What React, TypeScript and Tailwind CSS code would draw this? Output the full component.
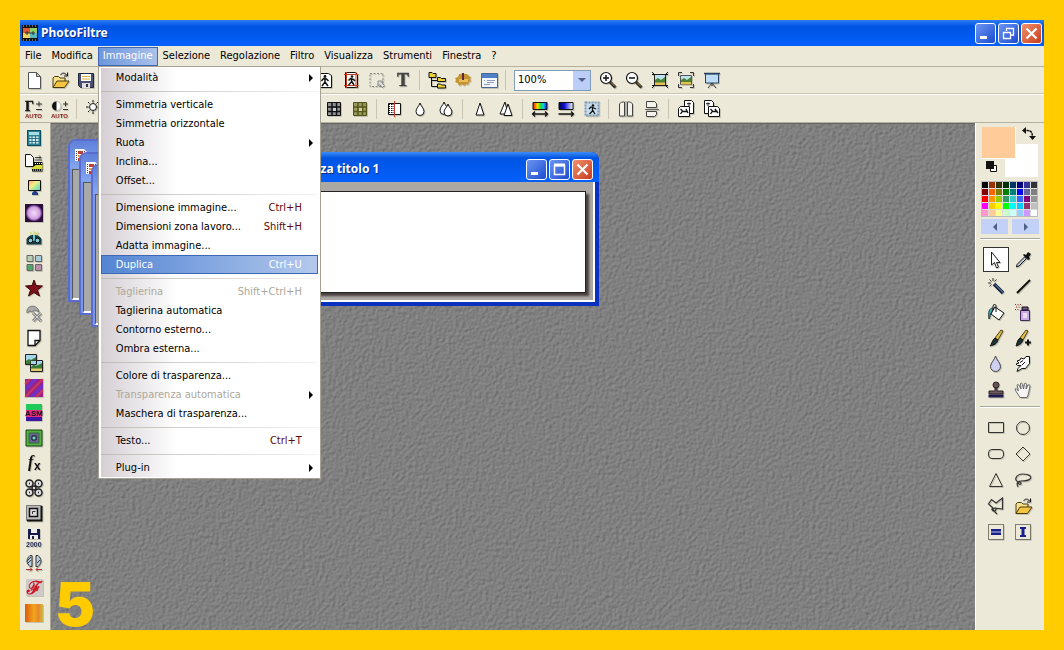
import type { ReactNode } from "react";

const K = "#111";

const icons: Record<string, ReactNode> = {
  newFile: <path d="M3.5 1.5h8l4 4v12h-12z M11.5 1.5v4h4" fill="#fff" stroke="#555" />,
  open: (
    <>
      <path d="M2 16.500V7l1.500-1.500h4L9 7h5v3" fill="#f8e08a" stroke="#4a3a10" />
      <path d="M2 16.500l4-6.500h12l-4.500 6.500z" fill="#f5c542" stroke="#4a3a10" />
      <path d="M9.500 4C11 1.500 14 1.500 15.500 4M16.500 1.500v3.500h-3.500" fill="none" stroke={K} />
    </>
  ),
  save: (
    <>
      <path d="M1.500 2.500h15v14h-13l-2-2z" fill="#4a4f70" stroke="#23263c" />
      <path d="M4 3h10v7H4z" fill="#fff" />
      <path d="M5 5h8v1H5zM5 7.500h8v1H5z" fill="#d9b23c" />
      <path d="M5 12h8v5H5z" fill="#ddd" />
      <path d="M9 13h2v3H9z" fill="#334" />
    </>
  ),
  walker: (
    <>
      <path d="M1.500 2.500h11l3 2v12h-14z" fill="#fff" stroke={K} />
      <circle cx="9" cy="5.500" r="1.400" fill={K} />
      <path d="M9 7v4l-3 4M9 11l3 4M5.500 10l2-2.500 3 .5 2 2" fill="none" stroke={K} strokeWidth="1.500" />
    </>
  ),
  walkerRed: (
    <>
      <path d="M3.500 1.500h10l2 2v13h-12z" fill="#fff" stroke={K} />
      <path d="M2 3.500h14.500M2 14.500h14.500M4.500 1v16M14 1v16" stroke="#c33a1c" />
      <circle cx="10" cy="5.500" r="1.300" fill={K} />
      <path d="M9.500 7v4l-3 3M9.500 10l2.500 4M6.500 9.500l2-2 3 1 1.500 1.500" fill="none" stroke={K} strokeWidth="1.500" />
    </>
  ),
  marquee: (
    <>
      <path d="M2 2.500h13v13H2z" fill="none" stroke="#888" strokeDasharray="2 1.500" />
      <path d="M10 10h5l-1.500 1.500 3 3-2 2-3-3L10 15z" fill="#ddd" stroke="#888" />
    </>
  ),
  text: (
    <text x="9" y="15" textAnchor="middle" fontSize="18" fontWeight="700" fill="#444" stroke="#444" strokeWidth="0.5" fontFamily="Liberation Serif">T</text>
  ),
  tree: (
    <>
      <path d="M3.500 6v9.500H9M3.500 9.500H9" fill="none" stroke={K} />
      <path d="M1 1.500h3l1 1h3v4H1zM9.500 6.500h3l1 1h4v3h-8zM9.500 13h3l1 1h4v3h-8z" fill="#e8cf3a" stroke={K} />
    </>
  ),
  gear: (
    <>
      <path d="M7 3l2-1 2 1 2 0 2 2 2 1-1 2 1 2-2 1-1 3-2-1-2 2-2-2-3 2-1-3-3-1 1-2-1-2 3-1 1-3z" fill="#c69430" />
      <path d="M5 8h9v3H5z" fill="#e7be5b" />
      <path d="M9 2v7" stroke="#5d2a3a" strokeWidth="2" />
    </>
  ),
  windowList: (
    <>
      <path d="M1.500 2.500h16v14h-16z" fill="#f1f6ff" stroke="#49688f" />
      <path d="M2 3h15v4H2z" fill="#4f7fc4" />
      <path d="M7 9.500h8M7 11.500h7M4 13.500h6M4 9.500h1" stroke="#8d9db8" />
    </>
  ),
  zoomIn: (
    <>
      <circle cx="7" cy="7" r="5.500" fill="#fff" stroke={K} strokeWidth="1.200" />
      <path d="M4 7h6M7 4v6" stroke={K} strokeWidth="1.500" />
      <path d="M11 11l5.500 5.500" stroke="#222" strokeWidth="3" />
      <path d="M12 11.500l4 4" stroke="#c9a24c" />
    </>
  ),
  zoomOut: (
    <>
      <circle cx="7" cy="7" r="5.500" fill="#fff" stroke={K} strokeWidth="1.200" />
      <path d="M4 7h6" stroke={K} strokeWidth="1.500" />
      <path d="M11 11l5.500 5.500" stroke="#222" strokeWidth="3" />
      <path d="M12 11.500l4 4" stroke="#c9a24c" />
    </>
  ),
  picture: (
    <>
      <path d="M3.500 3.500h11v11h-11z" fill="#bde2f2" stroke="#222" />
      <path d="M4 9l3-2 3 2 4-3v8H4z" fill="#4b8234" />
      <path d="M4 11.500h10V14H4z" fill="#e3c04f" />
      <path d="M1 1l3 3M17 1l-3 3M1 17l3-3M17 17l-3-3M1 3.500h3M14 3.500h3M1 14.500h3M14 14.500h3" stroke={K} />
    </>
  ),
  pictureOut: (
    <>
      <path d="M3.500 4.500h11v9h-11z" fill="#bde2f2" stroke="#555" />
      <path d="M4 9l3-2 3 2 4-3v7H4z" fill="#4b8234" />
      <path d="M4 11h10v2.500H4z" fill="#e3c04f" />
      <path d="M1.500 5V1.500H5M13 1.500h3.500V5M1.500 13v3.500H5M13 16.500h3.500V13" fill="none" stroke="#333" />
    </>
  ),
  screen: (
    <>
      <path d="M2.500 3h13v9h-13z" fill="#bcdcf7" stroke="#2a4260" />
      <path d="M1 2.500h16" stroke="#2a4260" strokeWidth="1.500" />
      <path d="M9 12l-4 5M9 12l4 5M9 12v3" stroke="#333" />
    </>
  ),
  gamma: (
    <>
      <text x="0" y="11" fontSize="14" fontWeight="700" fill={K} stroke={K} strokeWidth="0.4" fontFamily="Liberation Serif">Γ</text>
      <path d="M11 4h6M14 1.500v5M11 9.500h6" stroke="#333" />
      <text x="0" y="18" fontSize="6" fontWeight="700" fill="#8b1a1a" fontFamily="Liberation Sans">AUTO</text>
    </>
  ),
  contrast: (
    <>
      <circle cx="5.500" cy="6" r="4.500" fill="#fff" stroke="#bbb" />
      <path d="M5.500 1.500a4.500 4.500 0 0 0 0 9z" fill={K} />
      <path d="M12 4h5M14.500 1.500v5M12 9.500h5" stroke="#333" />
      <text x="0" y="18" fontSize="6" fontWeight="700" fill="#8b1a1a" fontFamily="Liberation Sans">AUTO</text>
    </>
  ),
  sun: (
    <>
      <circle cx="8" cy="7" r="3.500" fill="#fff" stroke={K} />
      <path d="M8 0v2.500M8 11.500V14M1 7h2.500M12.500 7H15M3 2l1.500 1.500M13 2l-1.500 1.500M3 12l1.500-1.500" stroke={K} />
      <path d="M14 13.500h4" stroke={K} strokeWidth="2" />
    </>
  ),
  grid: (
    <>
      <path d="M2.500 2.500h13v13h-13z" fill="#8f8f96" stroke={K} />
      <path d="M7 2v14M11.500 2v14M2 7h14M2 11.500h14" stroke={K} strokeWidth="1.500" />
      <path d="M8 8h3v3H8z" fill="#ccc" />
    </>
  ),
  gridOlive: (
    <>
      <path d="M2.500 2.500h13v13h-13z" fill="#9a9a5c" stroke="#4f5218" />
      <path d="M7 2v14M11.500 2v14M2 7h14M2 11.500h14" stroke="#565a1e" strokeWidth="1.500" />
      <path d="M8 8h3v3H8z" fill="#d2d29a" />
    </>
  ),
  halfMask: (
    <>
      <path d="M3.500 3.500h12v11h-12z" fill="#fff" stroke={K} />
      <path d="M4.500 4v10M6.500 4v10M8 4v10" stroke={K} strokeDasharray="1 1" />
      <path d="M9.500 1v16" stroke="#c23a2a" />
    </>
  ),
  drop: <path d="M9 3c1 3.500 4 5 4 8.500a4 4 0 0 1-8 0C5 8 8 6.500 9 3z" fill="#fff" stroke={K} />,
  drops: (
    <>
      <path d="M7 2c1 3.500 4 5 4 8.500a4 4 0 0 1-8 0C3 7 6 5.500 7 2z" fill="#fff" stroke={K} />
      <path d="M11 4c1 3.500 4 5 4 8a4 4 0 0 1-8 0c0-3 3-4.500 4-8z" fill="#fff" stroke={K} />
    </>
  ),
  cone: <path d="M9 3l4 12H5z" fill="#fff" stroke={K} />,
  cones: (
    <>
      <path d="M8 2L3 14h8z" fill="#fff" stroke={K} />
      <path d="M11 4L7 15.500h8z" fill="#fff" stroke={K} />
    </>
  ),
  spectrum: (
    <>
      <defs>
        <linearGradient id="rainbow">
          <stop offset="0" stopColor="#f00" />
          <stop offset=".3" stopColor="#fd0" />
          <stop offset=".55" stopColor="#2d3" />
          <stop offset=".75" stopColor="#0cf" />
          <stop offset="1" stopColor="#20d" />
        </linearGradient>
      </defs>
      <path d="M2 2.500h14v7H2z" fill="url(#rainbow)" stroke={K} />
      <path d="M1.500 14h15M4 11.500L1.500 14 4 16.500M14 11.500l2.500 2.500-2.500 2.500" fill="none" stroke={K} strokeWidth="1.300" />
    </>
  ),
  blues: (
    <>
      <defs>
        <linearGradient id="bluefade">
          <stop offset="0" stopColor="#004" />
          <stop offset=".4" stopColor="#11d" />
          <stop offset="1" stopColor="#fff" />
        </linearGradient>
      </defs>
      <path d="M2 2.500h14v7H2z" fill="url(#bluefade)" stroke={K} />
      <path d="M1.500 14h15M14 11.500l2.500 2.500-2.500 2.500" fill="none" stroke={K} strokeWidth="1.300" />
    </>
  ),
  stamp: (
    <>
      <path d="M2.500 2.500h13v13h-13z" fill="#c8dcee" stroke="#7f9ab4" strokeWidth="2" strokeDasharray="2 1" />
      <circle cx="10" cy="5.500" r="1.300" fill={K} />
      <path d="M9.500 7v4l-3 3M9.500 10l2.500 4M6 9l2-2 3 1 2 1" fill="none" stroke={K} strokeWidth="1.300" />
    </>
  ),
  mirror: (
    <>
      <path d="M2.500 4l2-2h3v14h-5zM10.500 2h3l2 2v12h-5z" fill="#f4f2ea" stroke="#444" />
      <path d="M9 1v16" stroke="#999" />
    </>
  ),
  flip: (
    <>
      <path d="M3.500 1.500h8l2 2v4h-10zM3.500 11.500h10v3l-2 2h-8z" fill="#f4f2ea" stroke="#444" />
      <path d="M2 9.500h14" stroke="#666" />
    </>
  ),
  rotateL: (
    <>
      <path d="M7.500 .5h7l2 2v11h-9z" fill="#fff" stroke={K} />
      <path d="M10 4l2-1 2 1M12 3v3" stroke={K} fill="none" />
      <path d="M1.500 8.500l2-2h9v10h-11z" fill="#fff" stroke={K} />
      <path d="M3.500 9l2 2-2 3M5.500 11.500h5M9 9l2 4" stroke={K} fill="none" strokeWidth="1.300" />
    </>
  ),
  rotateR: (
    <>
      <path d="M1.500 .5h7l2 2v11h-9z" fill="#fff" stroke={K} />
      <path d="M3 4l2-1 2 1M5 3v3" stroke={K} fill="none" />
      <path d="M5.500 6.500h9l2 2v8h-11z" fill="#fff" stroke={K} />
      <path d="M7.500 9l2 2-2 3M9.500 11.500h5M12 9l3 4" stroke={K} fill="none" strokeWidth="1.300" />
    </>
  ),
  calculator: (
    <>
      <path d="M2 1h14v16H2z" fill="#2b8296" />
      <path d="M4 3h10v3H4z" fill="#a9dbe2" />
      <path d="M4.500 7.500h9v7h-9z" fill="#d6f2f4" />
      <path d="M4 9.500h10M4 12.500h10M7 7v8M10.500 7v8" stroke="#2b6f82" />
      <path d="M2.500 1.500h13v15h-13z" fill="none" stroke="#0c4c60" />
    </>
  ),
  filmDoc: (
    <>
      <path d="M7 8h10.500v9.500H7z" fill={K} />
      <path d="M8 9.500h9M8 16h9" stroke="#fff" strokeDasharray="1 1" />
      <path d="M6 14l5-3h6.500v4H6z" fill="#d8dc38" />
      <path d="M.5 .5h5l3 3v9h-8z" fill="#fff" stroke={K} />
      <path d="M10 3.500h6M14 1.500l2 2-2 2M10 6h7" stroke="#444" fill="none" />
    </>
  ),
  monitor: (
    <>
      <defs>
        <linearGradient id="rainbowSoft" x2="1" y2="1">
          <stop offset="0" stopColor="#ff8f7a" />
          <stop offset=".4" stopColor="#f9ef87" />
          <stop offset=".7" stopColor="#8fe7a4" />
          <stop offset="1" stopColor="#7eb8f5" />
        </linearGradient>
      </defs>
      <path d="M3.500 1.500h12v10h-12z" fill="url(#rainbowSoft)" stroke={K} />
      <path d="M9 12h2l2 2v2H7v-2z" fill="#23408a" />
    </>
  ),
  glow: (
    <>
      <defs>
        <radialGradient id="glowball">
          <stop offset="0" stopColor="#f4dcfa" />
          <stop offset=".7" stopColor="#cfa0dd" />
          <stop offset=".85" stopColor="#8a55a8" />
          <stop offset="1" stopColor="#2c0f38" />
        </radialGradient>
      </defs>
      <path d="M0 0h18v18H0z" fill="#2c0f38" />
      <circle cx="9" cy="9" r="8.500" fill="url(#glowball)" />
    </>
  ),
  camera: (
    <>
      <path d="M3 8l3-2h6l3 2 1.500 2v5.500h-15V10z" fill="#123c46" />
      <path d="M9 2v5M5 3l2 3M13 3l-2 3" stroke="#e0e080" strokeWidth="1.500" />
      <path d="M8 6h2v6H8z" fill="#6fc6d0" />
      <circle cx="5.500" cy="11.500" r="2.300" fill="#7fccd4" stroke={K} />
      <circle cx="12.500" cy="11.500" r="2.300" fill="#7fccd4" stroke={K} />
    </>
  ),
  tiles: (
    <g stroke="#666">
      <path d="M2 1.500h6v6H2z" fill="#b9cdb2" />
      <path d="M10.500 1.500h6v6h-6z" fill="#a9cdd8" />
      <path d="M2 10.500h6v6H2z" fill="#53a56a" />
      <path d="M10.500 10.500h6v6h-6z" fill="#b990ab" />
    </g>
  ),
  star: <path d="M9 1l2 5.500 6.500.5-5 4 2 6L9 13.500 3.500 17l2-6-5-4L7 6.500z" fill="#7d1019" stroke="#3a0508" />,
  pickaxe: (
    <>
      <path d="M2 6c2-5 8-5 11-1l1 3-4-2-3 2-2-1-3 2z" fill="#aaa" stroke="#777" />
      <path d="M8 9l8 8M16 9l-8 8" stroke="#888" strokeWidth="3" />
      <path d="M8 9l8 8M16 9l-8 8" stroke="#ccc" />
    </>
  ),
  page: <path d="M3 1.500h12v10l-5 5H3zM10 16.500v-5h5" fill="#fff" stroke={K} strokeWidth="1.300" />,
  photos: (
    <>
      <path d="M.5 .5h11v10H.5zM5.500 6.500h12v11h-12z" fill="#a5d6ee" stroke="#222" />
      <path d="M1 7l3-2 2 1 5-3v3.500H5.500V10H1zM6 13l3-3 2 2 6-3v6H6z" fill="#3d7a35" />
      <path d="M6 14.500h11V17H6z" fill="#e3d06a" />
    </>
  ),
  plasma: (
    <>
      <path d="M0 0h18v18H0z" fill="#a01f85" />
      <path d="M0 8L8 0h5L0 13zM4 18L18 4v5l-9 9z" fill="#7030c4" />
      <path d="M0 18L18 0M0 5l5-5M11 18l7-7" stroke="#d24848" strokeWidth="2" opacity=".7" />
    </>
  ),
  asm: (
    <>
      <path d="M1 0h16v6H1z" fill="#1ecb58" />
      <path d="M1 6h16v7H1z" fill="#ee2c86" />
      <path d="M1 13h16v4H1z" fill="#3d16a8" />
      <text x="9" y="11.500" textAnchor="middle" fontSize="8" fontWeight="700" fill={K} fontFamily="Liberation Sans">ASM</text>
    </>
  ),
  squares: (
    <>
      <path d="M1 1h16v16H1z" fill="#55b03e" stroke="#174316" />
      <path d="M4 4h10v10H4z" fill="#6c6498" stroke="#2d6b3a" />
      <path d="M7 7h4v4H7z" fill="#76d5cc" stroke={K} />
    </>
  ),
  fx: (
    <>
      <text x="3" y="13" fontSize="16" fontStyle="italic" fontWeight="700" fill={K} fontFamily="Liberation Serif">f</text>
      <text x="9" y="16" fontSize="12" fontWeight="700" fill={K} fontFamily="Liberation Sans">x</text>
    </>
  ),
  rings: (
    <g fill="#ddd" stroke="#222" strokeWidth="1.500">
      <circle cx="4.500" cy="4.500" r="3.500" />
      <circle cx="13.500" cy="4.500" r="3.500" />
      <circle cx="4.500" cy="13.500" r="3.500" />
      <circle cx="13.500" cy="13.500" r="3.500" />
      <circle cx="9" cy="9" r="2" />
      <path d="M4 4.500h1M13 4.500h1M4 13.500h1M13 13.500h1" />
    </g>
  ),
  frame: (
    <>
      <path d="M1.500 1.500h15v15h-15z" fill="#bbb" stroke="#777" />
      <path d="M16.500 2v14.500H2" fill="none" stroke={K} strokeWidth="2" />
      <path d="M4.500 4.500h8v8h-8z" fill="#ddd" stroke={K} strokeWidth="1.500" />
      <path d="M7.500 10V7.500h3" stroke="#333" fill="none" />
    </>
  ),
  save2000: (
    <>
      <path d="M3 0h12v10H3z" fill="#151a4a" />
      <path d="M6 0h6v4H6zM5 6h8v4H5z" fill="#eee" />
      <path d="M7 7h2v3H7z" fill="#223" />
      <text x="1" y="18" fontSize="7" fontWeight="700" fill="#1c2550" fontFamily="Liberation Sans">2000</text>
    </>
  ),
  lenses: (
    <>
      <path d="M5 1.500h2v11H5C1 9 1 5 5 1.500zM11 1.500h2c4 3.500 4 7.500 0 11h-2z" fill="#b7cde0" stroke="#333" />
      <path d="M2 7l4-4M2 10l4-4M12 9l3-3" stroke="#333" />
      <path d="M1 15.500h6M5 13.500l2 2-2 2M17 15.500h-6M13 13.500l-2 2 2 2" stroke="#a33" fill="none" />
    </>
  ),
  scriptF: (
    <>
      <path d="M1 0h17v17H1z" fill="#cfcac8" />
      <text x="9" y="15" textAnchor="middle" fontSize="18" fontWeight="700" fill="#cb1723" fontFamily="Liberation Serif, DejaVu Serif, serif">ℱ</text>
    </>
  ),
  orangeFade: (
    <>
      <defs>
        <linearGradient id="orangefade">
          <stop offset="0" stopColor="#dc5a10" />
          <stop offset=".5" stopColor="#f2a51c" />
          <stop offset=".75" stopColor="#e8862a" />
          <stop offset="1" stopColor="#c7c24c" />
        </linearGradient>
      </defs>
      <path d="M0 0h18v18H0z" fill="url(#orangefade)" />
    </>
  ),
  pointer: <path d="M4.500 1v13l3-2.500 2 5.500 2-1-2-4.500H13z" fill="#fff" stroke="#222" />,
  dropper: (
    <>
      <path d="M10 3l2 1 2-3 3 2-2 3 1 2-2 1-5-5z" fill={K} />
      <path d="M10.500 6L3 13.500 2.500 16 5 15l7.500-7.500z" fill="#bcd" stroke={K} />
    </>
  ),
  wand: (
    <>
      <path d="M7 7l9 9" stroke="#14213f" strokeWidth="3.500" />
      <path d="M8 7.500l8 8" stroke="#7fa4d0" />
      <path d="M6 1v3M1 6h3M2.500 2.500l2 2M9.500 2.500l-2 2M2.500 9.500l2-2" stroke="#333" />
    </>
  ),
  line: <path d="M3 16L16 3" stroke={K} strokeWidth="2" />,
  bucket: (
    <>
      <path d="M8 4l9 6-5 7-8-6z" fill="#fff" stroke={K} />
      <path d="M9 9V2.500L7.500 1 6 3v4" fill="none" stroke={K} />
      <path d="M6 5c-4 0-5 4-4 11 1.500-1 .5-6 3-7z" fill="#40b3a6" stroke="#234" />
    </>
  ),
  spray: (
    <>
      <path d="M6.500 7.500h9v10h-9z" fill="#c9a9e3" stroke="#432a5c" />
      <path d="M8 4h6v3H8z" fill="#7a5a9a" stroke={K} />
      <path d="M9 10h4v5H9z" fill="#eedcf5" />
      <path d="M1 1.500h6M2 4h5M1 6.500h4" stroke="#8d2430" strokeDasharray="1 1.500" />
    </>
  ),
  brush: (
    <>
      <path d="M14 1l2 1-5 9-3-2z" fill="#e0c04c" stroke="#4d3a12" />
      <path d="M8 9l3 2c-1 4-4 5-8 6 2-2 2-6 5-8z" fill="#1d3433" stroke={K} />
    </>
  ),
  brushPlus: (
    <>
      <path d="M12 1l2 1-5 9-3-2z" fill="#e0c04c" stroke="#4d3a12" />
      <path d="M6 9l3 2c-1 4-4 5-7 6 1-2 1-6 4-8z" fill="#1d3433" stroke={K} />
      <path d="M11 13.500h6M14 10.500v6" stroke={K} strokeWidth="2" />
    </>
  ),
  blur: <path d="M8.500 1c1 4 5 7 5 10.500a5 5 0 0 1-10 0C3.500 8 7.500 5 8.500 1z" fill="#cfcff2" stroke="#444" />,
  smudge: (
    <>
      <path d="M15.500 1.500v7l-4 5H8l-5 3 1-3 3-3H3.500L2 9l3-1-2-2 3-1 1-2 3 1 2-2.500z" fill="#fafafa" stroke={K} />
      <path d="M6 7.500l3-2M8 10l3-3" stroke={K} />
    </>
  ),
  rubber: (
    <>
      <circle cx="9" cy="4" r="3" fill="#675358" stroke="#2c2226" />
      <path d="M8 7h2v3h6v3H2v-3h6z" fill="#6d5960" stroke="#2c2226" />
      <path d="M1.500 13.500h15v3h-15z" fill="#1f1b4e" />
    </>
  ),
  hand: (
    <path d="M6 16.500C4 13 2 11 1 8c1-1 2 0 3.500 2L3 4c1-1 2 0 2.500 1L7 8 6.500 2.500c1-1 2 0 2 1L9.500 8l1-5.500c1-1 2 0 2 1L12 8l2-4c1-.5 2 0 2 1-1 4-1 8-3 11.500z" fill="#f4f4f4" stroke="#666" />
  ),
  rect: <path d="M1.500 3.500h15v10h-15z" fill="none" stroke="#333" />,
  ellipse: <circle cx="9" cy="9" r="6.500" fill="none" stroke="#333" />,
  round: <rect x="1.500" y="4.500" width="15" height="9" rx="3.500" fill="none" stroke="#333" />,
  diamond: <path d="M9 2l7 7-7 7-7-7z" fill="none" stroke="#333" />,
  triangle: <path d="M9 2.500l6.500 13h-13z" fill="none" stroke="#333" />,
  lasso: (
    <path d="M5 11C-1 10 2 3 9 3s9 3 7 5-6 2-9 2-4 2-2 3 3-1 1-2-4 1-2 5" fill="none" stroke="#333" strokeWidth="1.200" />
  ),
  polyLasso: (
    <path d="M6 11L1.500 7l3-4.500L9 6l6.500-5v11L8 11M6 11c-2 1-1 3 1 3s3-3 1-3-3 1-1 3l3 3" fill="none" stroke="#333" strokeWidth="1.200" />
  ),
  selRow: (
    <>
      <path d="M1.500 1.500h15v15h-15z" fill="#ece9d8" stroke={K} strokeDasharray="1 1" />
      <path d="M4 6h10v6H4z" fill="#1a1f8e" />
      <path d="M4 9h10" stroke="#bcd" />
    </>
  ),
  selCol: (
    <>
      <path d="M1.500 1.500h15v15h-15z" fill="#ece9d8" stroke={K} strokeDasharray="1 1" />
      <path d="M6 4h6v2h-1.500v6H12v2H6v-2h1.500V6H6z" fill="#1a1f8e" />
    </>
  ),
};

function Icon({ name }: { name: string }) {
  return (
    <svg
      viewBox="0 0 18 18"
      className="size-[18px] shrink-0 overflow-visible drop-shadow-[1px_1px_0_rgba(120,120,100,0.35)]"
      aria-hidden="true"
    >
      {icons[name]}
    </svg>
  );
}

function Tools({ names }: { names: string[] }) {
  return (
    <div className="flex">
      {names.map((n) => (
        <button key={n} type="button" aria-label={n} className="flex h-6 w-[26px] items-center justify-center">
          <Icon name={n} />
        </button>
      ))}
    </div>
  );
}

function Sep() {
  return <div className="mr-1 ml-[3px] h-5 w-px bg-[#c9c5b2]" />;
}

type Item = { label: string; key?: string; sub?: boolean; off?: boolean; on?: boolean };

const menuGroups: Item[][] = [
  [{ label: "Modalità", sub: true }],
  [
    { label: "Simmetria verticale" },
    { label: "Simmetria orizzontale" },
    { label: "Ruota", sub: true },
    { label: "Inclina..." },
    { label: "Offset..." },
  ],
  [
    { label: "Dimensione immagine...", key: "Ctrl+H" },
    { label: "Dimensioni zona lavoro...", key: "Shift+H" },
    { label: "Adatta immagine..." },
    { label: "Duplica", key: "Ctrl+U", on: true },
  ],
  [
    { label: "Taglierina", key: "Shift+Ctrl+H", off: true },
    { label: "Taglierina automatica" },
    { label: "Contorno esterno..." },
    { label: "Ombra esterna..." },
  ],
  [
    { label: "Colore di trasparenza..." },
    { label: "Transparenza automatica", sub: true, off: true },
    { label: "Maschera di trasparenza..." },
  ],
  [{ label: "Testo...", key: "Ctrl+T" }],
  [{ label: "Plug-in", sub: true }],
];

function MenuRow({ item }: { item: Item }) {
  const tone = item.on
    ? "border-[#3f68b4] bg-linear-to-r from-[#5385d3] to-[#b4c8ec] text-white"
    : item.off
      ? "border-transparent text-[#aca899]"
      : "border-transparent text-black";
  const keyTone = item.on ? "text-white" : item.off ? "text-[#aca899]" : "text-[#5c0a0a]";
  return (
    <button type="button" role="menuitem" className={`flex h-[19px] w-full items-center border pr-1 pl-[14px] text-left ${tone}`}>
      <span className="flex-1">{item.label}</span>
      {item.key && <span className={`pr-[11px] ${keyTone}`}>{item.key}</span>}
      {item.sub && (
        <svg viewBox="0 0 4 8" className="h-2 w-1" aria-hidden="true">
          <path d="M0 0l4 4-4 4z" fill="#000" />
        </svg>
      )}
    </button>
  );
}

function ImageMenu() {
  return (
    <div role="menu" className="absolute top-full left-0 z-20 w-[223px] border border-[#a5a293] bg-white py-px pr-0.5 pl-0.5">
      <div className="bg-linear-to-r from-[#d5cfd4] to-white to-35%">
        {menuGroups.map((g, i) => (
          <div key={g[0].label}>
            {i > 0 && (
              <div className="flex h-2 items-center">
                <div className="h-px w-full bg-linear-to-r from-[#bdb9b4] to-[#f4f4f4]" />
              </div>
            )}
            {g.map((it) => (
              <MenuRow key={it.label} item={it} />
            ))}
          </div>
        ))}
      </div>
    </div>
  );
}

const menus = ["File", "Modifica", "Immagine", "Selezione", "Regolazione", "Filtro", "Visualizza", "Strumenti", "Finestra", "?"];

function CaptionButton({ kind }: { kind: "min" | "max" | "restore" | "close" }) {
  const bg = kind === "close" ? "from-[#f0906c] to-[#c8391a]" : "from-[#6c96f2] to-[#1d49cf]";
  return (
    <button
      type="button"
      aria-label={kind}
      className={`flex size-[21px] items-center justify-center rounded-[3px] border border-white bg-linear-to-br ${bg}`}
    >
      <svg viewBox="0 0 19 19" className="size-[19px]" fill="none" stroke="#fff" aria-hidden="true">
        {kind === "min" && <path d="M4 13.500h7" strokeWidth="3" />}
        {kind === "max" && <path d="M4.500 5v9.500h10V5M4 5.500h11" strokeWidth="1.500" />}
        {kind === "max" && <path d="M4 5h11" strokeWidth="3" />}
        {kind === "restore" && <path d="M7.500 7V4.500h7V11H12M4.500 8v6.500h7V8M4 8.500h8" strokeWidth="1.300" />}
        {kind === "close" && <path d="M4.500 4.500l10 10M14.500 4.500l-10 10" strokeWidth="2.200" />}
      </svg>
    </button>
  );
}

function AppLogo() {
  return (
    <svg viewBox="0 0 16 16" className="size-4" aria-hidden="true">
      <path d="M0 0h16v16H0z" fill="#111" />
      <path d="M1 1h14M1 15h14" stroke="#bbb" strokeDasharray="1 2" />
      <path d="M1 3h7v5H1z" fill="#e5553a" />
      <path d="M8 3h7v5H8z" fill="#8ed06a" />
      <path d="M1 8h7v5H1z" fill="#f2d35c" />
      <path d="M8 8h7v5H8z" fill="#58b8c0" />
      <path d="M5 6v4M11 6v4M3 8h10" stroke="#333" />
    </svg>
  );
}

function InactiveWindow({ place }: { place: string }) {
  return (
    <div className={`absolute flex h-[163px] w-44 flex-col rounded-t-lg border-2 border-[#5b6cd0] bg-[#7a96e6] ${place}`}>
      <div className="flex h-7 items-center rounded-t-md bg-linear-to-b from-[#5f80da] to-[#85a6ef] pl-[5px]">
        <svg viewBox="0 0 14 14" className="size-[14px]" aria-hidden="true">
          <path d="M0 1h9l3 3v9H0z" fill="#fff" />
          <path d="M1.500 3v10M9.500 3v10" stroke="#444" strokeDasharray="1 1" />
          <path d="M3 3h5v3H3z" fill="#c43a34" />
          <path d="M3 7h5v2H3z" fill="#f0a040" />
          <path d="M3 10h5v3H3z" fill="#b33" />
        </svg>
      </div>
      <div className="ml-0.5 flex-1 border-t border-b-2 border-l border-t-[#555] border-b-white border-l-[#555] bg-[#a9a9a9]" />
    </div>
  );
}

const paletteColors =
  "#000 #993300 #333300 #003300 #003366 #000080 #333399 #333333 #800000 #ff6600 #808000 #008000 #008080 #0000ff #666699 #808080 #ff0000 #ff9900 #99cc00 #339966 #33cccc #3366ff #800080 #969696 #ff00ff #ffcc00 #ffff00 #00ff00 #00ffff #00ccff #993366 #c0c0c0 #ff99cc #ffcc99 #ffff99 #ccffcc #ccffff #99ccff #cc99ff #ffffff".split(" ");

const leftTools = [
  "calculator", "filmDoc", "monitor", "glow", "camera", "tiles", "star", "pickaxe", "page", "photos",
  "plasma", "asm", "squares", "fx", "rings", "frame", "save2000", "lenses", "scriptF", "orangeFade",
];

function ToolGrid({ names, active }: { names: string[]; active?: string }) {
  return (
    <div className="grid grid-cols-[26px_26px] gap-px px-[7px]">
      {names.map((n) => (
        <button
          key={n}
          type="button"
          aria-label={n}
          className={`flex h-[25px] items-center justify-center border ${n === active ? "border-[#333] bg-white" : "border-transparent"}`}
        >
          <Icon name={n} />
        </button>
      ))}
    </div>
  );
}

export default function App() {
  return (
    <div className="flex min-h-screen flex-col bg-[#ffcc00] p-5 font-['DejaVu_Sans_Condensed','DejaVu_Sans',sans-serif] text-[11px] leading-[14px] text-black">
      <div className="flex flex-1 flex-col bg-[#ece9d8]">
        <header className="flex h-[26px] items-center bg-linear-to-b from-[#2b7bf5] via-[#0054e3] via-25% to-[#0560fb] pr-0.5 pl-0.5">
          <AppLogo />
          <h1 className="flex-1 pl-[3px] font-['Noto_Sans',sans-serif] text-[12px] font-bold text-white [text-shadow:1px_1px_0_#0a2a80]">
            PhotoFiltre
          </h1>
          <div className="flex gap-0.5">
            <CaptionButton kind="min" />
            <CaptionButton kind="restore" />
            <CaptionButton kind="close" />
          </div>
        </header>

        <nav className="flex h-5 items-end">
          {menus.map((m) => (
            <div key={m} className="relative">
              <button
                type="button"
                className={`flex h-[19px] items-center border px-1 pb-0.5 ${m === "Immagine" ? "border-[#3f68b4] bg-linear-to-r from-[#6d97dc] to-[#a9c0ea] text-white" : "border-transparent"}`}
              >
                {m}
              </button>
              {m === "Immagine" && <ImageMenu />}
            </div>
          ))}
        </nav>

        <div className="flex h-7 items-center border-t border-b border-t-[#b5b19e] border-b-[#c9c5b2] pl-px">
          <Tools names={["newFile", "open", "save"]} />
          <div className="w-[213px]" />
          <Tools names={["walker", "walkerRed", "marquee", "text"]} />
          <Sep />
          <Tools names={["tree", "gear", "windowList"]} />
          <Sep />
          <div className="relative mr-1 ml-1 flex h-[21px] w-[77px] border border-[#7f9db9] bg-white">
            <select aria-label="Zoom" defaultValue="100%" className="w-full appearance-none bg-white pl-[3px] outline-none">
              <option>100%</option>
              <option>50%</option>
            </select>
            <div className="pointer-events-none absolute inset-y-0 right-0 flex w-[17px] items-center justify-center bg-[#bccdf8]">
              <svg viewBox="0 0 8 6" className="h-1.5 w-2" aria-hidden="true">
                <path d="M0 1h8L4 5z" fill="#4d6185" />
              </svg>
            </div>
          </div>
          <Tools names={["zoomIn", "zoomOut", "picture", "pictureOut", "screen"]} />
        </div>

        <div className="flex h-[29px] items-center border-t border-b border-t-white border-b-[#b5b19e] pl-px">
          <Tools names={["gamma", "contrast"]} />
          <Sep />
          <Tools names={["sun"]} />
          <div className="w-[214px]" />
          <Tools names={["grid", "gridOlive"]} />
          <Sep />
          <Tools names={["halfMask", "drop", "drops"]} />
          <Sep />
          <Tools names={["cone", "cones"]} />
          <Sep />
          <Tools names={["spectrum", "blues", "stamp"]} />
          <Sep />
          <Tools names={["mirror", "flip"]} />
          <Sep />
          <Tools names={["rotateL", "rotateR"]} />
        </div>

        <div className="flex flex-1">
          <aside className="flex w-[31px] flex-col items-center border-r border-[#aca899] pt-0.5">
            {leftTools.map((n) => (
              <button key={n} type="button" aria-label={n} className="flex h-[25px] w-full items-center justify-center pr-0.5">
                <Icon name={n} />
              </button>
            ))}
          </aside>

          <main className="relative flex-1 border-t border-[#666] bg-[#808080]">
            <svg className="absolute inset-0 h-full w-full" aria-hidden="true">
              <filter id="paper" x="0" y="0" width="100%" height="100%" colorInterpolationFilters="sRGB">
                <feTurbulence type="fractalNoise" baseFrequency="0.3" numOctaves="3" seed="4" />
                <feDiffuseLighting surfaceScale="0.6" lightingColor="#949494">
                  <feDistantLight azimuth="225" elevation="60" />
                </feDiffuseLighting>
              </filter>
              <rect width="100%" height="100%" filter="url(#paper)" />
            </svg>

            <InactiveWindow place="left-[17px] top-[15px]" />
            <InactiveWindow place="left-[28px] top-[28px]" />
            <InactiveWindow place="left-[40px] top-[40px]" />

            <section className="absolute top-7 left-[170px] flex h-[154px] w-[378px] flex-col rounded-t-lg border-r-4 border-b-4 border-l-4 border-[#0831c0] bg-[#0831c0]">
              <div className="-mx-1 flex h-[30px] items-center rounded-t-lg bg-linear-to-b from-[#3c8cf8] via-[#0054e3] via-20% to-[#0560fb] pt-1 pr-1.5 pl-[78px]">
                <h2 className="flex-1 font-['Noto_Sans',sans-serif] text-[12px] font-bold text-white [text-shadow:1px_1px_0_#0a2a80]">
                  Senza titolo 1
                </h2>
                <div className="flex gap-0.5">
                  <CaptionButton kind="min" />
                  <CaptionButton kind="max" />
                  <CaptionButton kind="close" />
                </div>
              </div>
              <div className="flex flex-1 border-r-2 border-b-2 border-white bg-[#aca8a4] pt-[9px] pr-[7px] pb-[7px]">
                <div className="flex-1 border border-[#222] bg-white shadow-[3px_3px_2px_rgba(40,30,30,0.75)]" />
              </div>
            </section>

            <span className="absolute bottom-0 left-1 font-['Inter',sans-serif] text-[60px] leading-[52px] font-black text-[#ffcc00]">5</span>
          </main>

          <aside className="w-[69px] border-l border-white">
            <div className="relative mx-[6px] mt-1 h-[50px]">
              <div className="absolute right-0 bottom-0 h-[33px] w-[33px] bg-white" />
              <div className="absolute top-0 left-0 h-8 w-[34px] border-r border-b border-white bg-[#ffcc99]" />
              <svg viewBox="0 0 14 14" className="absolute top-0 right-0.5 size-[14px]" aria-hidden="true">
                <path d="M2 3.500h3.500c4 0 5 3 5 7" fill="none" stroke="#111" strokeWidth="1.500" strokeDasharray="2.500 .5" />
                <path d="M4 0v7L0 3.500zM7 9h7l-3.500 4z" fill="#111" />
              </svg>
              <svg viewBox="0 0 12 12" className="absolute bottom-1 left-1 size-3" aria-hidden="true">
                <path d="M4.500 4.500h6v6h-6z" fill="#fff" stroke="#111" />
                <path d="M0 0h8v8H0z" fill="#111" />
              </svg>
            </div>
            <div className="mx-[5px] mt-1 grid w-[57px] grid-cols-8 gap-px border border-[#bbb] bg-[#ddd]">
              {paletteColors.map((c) => (
                <div key={c} className="h-1.5" style={{ backgroundColor: c }} />
              ))}
            </div>
            <div className="mx-[5px] mt-0.5 flex gap-1">
              {["M5 0v8L1 4z", "M1 0l4 4-4 4z"].map((d) => (
                <button key={d} type="button" aria-label="Palette" className="flex h-[15px] w-[27px] items-center justify-center bg-[#c3d0f8]">
                  <svg viewBox="0 0 6 8" className="h-2 w-1.5" aria-hidden="true">
                    <path d={d} fill="#4d6185" />
                  </svg>
                </button>
              ))}
            </div>
            <div className="mx-1 mt-1 mb-[7px] h-0.5 border-t border-b border-t-[#aca899] border-b-white" />
            <ToolGrid
              active="pointer"
              names={["pointer", "dropper", "wand", "line", "bucket", "spray", "brush", "brushPlus", "blur", "smudge", "rubber", "hand"]}
            />
            <div className="mx-1 mt-1 mb-[7px] h-0.5 border-t border-b border-t-[#aca899] border-b-white" />
            <ToolGrid names={["rect", "ellipse", "round", "diamond", "triangle", "lasso", "polyLasso", "open", "selRow", "selCol"]} />
          </aside>
        </div>
      </div>
    </div>
  );
}
